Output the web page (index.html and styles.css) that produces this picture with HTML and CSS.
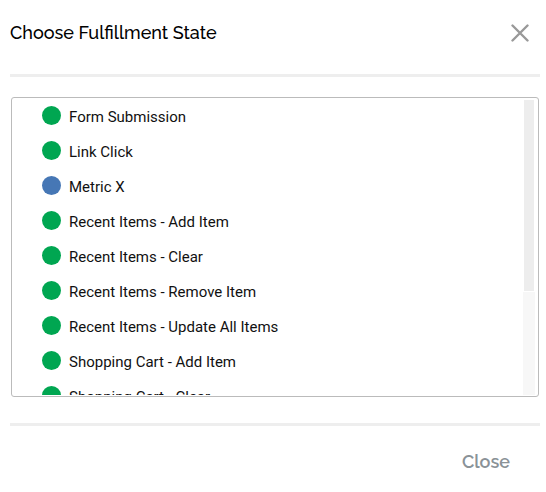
FILE: index.html
```html
<!DOCTYPE html>
<html lang="en">
<head>
  <meta charset="UTF-8" />
  <meta name="viewport" content="width=device-width, initial-scale=1.0" />
  <title>Choose Fulfillment State</title>
  <link rel="stylesheet" href="styles.css">
</head>
<body>
  <div class="modal" role="dialog" aria-labelledby="modalTitle">
    <div class="modal-header">
      <h1 id="modalTitle">Choose Fulfillment State</h1>
      <button class="modal-close" aria-label="Dismiss">
        <svg width="18" height="18" viewBox="0 0 18 18" aria-hidden="true">
          <path d="M1.5 1.5 L16.5 16.5 M16.5 1.5 L1.5 16.5" />
        </svg>
      </button>
    </div>

    <div class="modal-body">
      <div class="list-box">
        <ul class="state-list">
          <li><button class="state"><span class="dot"></span>Form Submission</button></li>
          <li><button class="state"><span class="dot"></span>Link Click</button></li>
          <li><button class="state"><span class="dot dot-blue"></span>Metric X</button></li>
          <li><button class="state"><span class="dot"></span>Recent Items - Add Item</button></li>
          <li><button class="state"><span class="dot"></span>Recent Items - Clear</button></li>
          <li><button class="state"><span class="dot"></span>Recent Items - Remove Item</button></li>
          <li><button class="state"><span class="dot"></span>Recent Items - Update All Items</button></li>
          <li><button class="state"><span class="dot"></span>Shopping Cart - Add Item</button></li>
          <li><button class="state"><span class="dot"></span>Shopping Cart - Clear</button></li>
        </ul>
        <div class="scroll-track">
          <div class="scroll-thumb"></div>
        </div>
      </div>
    </div>

    <div class="modal-footer">
      <button class="close-btn">Close</button>
    </div>
  </div>
</body>
</html>
```
FILE: styles.css
```css
* {
  box-sizing: border-box;
}

body {
  margin: 0;
  background: #fff;
  color: #111;
  font-family: Roboto, sans-serif;
}

button {
  padding: 0;
  border: none;
  background: none;
  font: inherit;
  color: inherit;
  cursor: pointer;
}

.modal {
  padding: 0 6px 0 10px;
}

.modal-header {
  display: flex;
  justify-content: space-between;
  align-items: center;
  height: 77px;
  padding: 0 11px 9px 0;
  border-bottom: 3px solid #eee;
}

.modal-header h1 {
  margin: 0;
  color: #000;
  font-family: Raleway, Lato, sans-serif;
  font-size: 18px;
  line-height: 24px;
  font-weight: 500;
}

.modal-close {
  display: flex;
}

.modal-close path {
  fill: none;
  stroke: #999;
  stroke-width: 2.4;
  stroke-linecap: round;
}

.modal-body {
  padding: 20px 1px 26px;
}

.list-box {
  display: flex;
  height: 300px;
  padding: 1px 3px 1px 0;
  border: 1px solid #bbb;
  border-radius: 3px;
}

.state-list {
  flex: 1;
  margin: 0;
  padding: 0 0 140px 30px;
  list-style: none;
  overflow-y: auto;
  scrollbar-width: none;
}

.scroll-track {
  width: 12px;
  padding: 1px;
  background: #f7f7f7;
}

.scroll-thumb {
  height: 65%;
  background: #ededed;
  outline: 1px solid #fff;
}

.state {
  display: flex;
  align-items: center;
  gap: 8px;
  width: 100%;
  height: 35px;
  font-size: 15px;
  text-align: left;
}

.dot {
  width: 19px;
  height: 19px;
  margin-bottom: 2px;
  border-radius: 50%;
  background: #00a651;
}

.dot-blue {
  background: #4677b5;
}

.modal-footer {
  display: flex;
  justify-content: flex-end;
  padding: 24px 30px;
  border-top: 3px solid #eee;
}

.close-btn {
  color: #8a9297;
  font-family: Raleway, Lato, sans-serif;
  font-size: 18px;
  line-height: 24px;
  font-weight: 600;
}
```
